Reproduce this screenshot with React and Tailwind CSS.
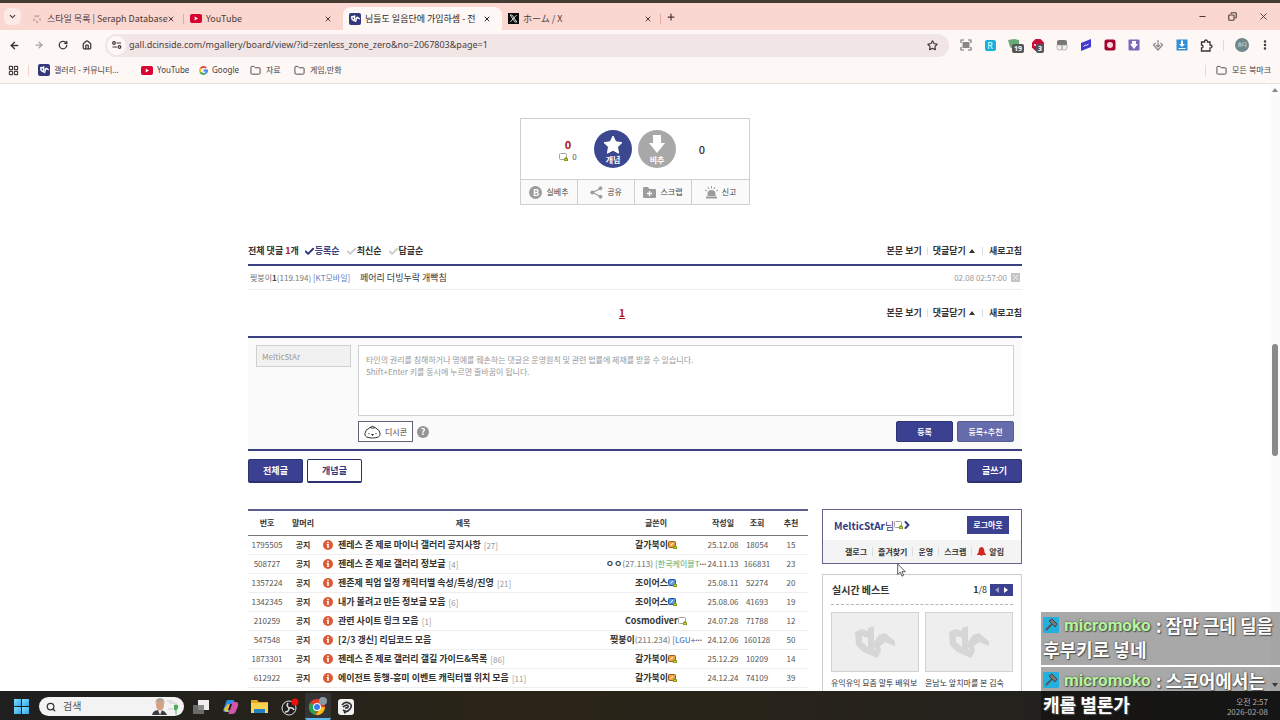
import React, { useState } from 'react';
import {
  ArrowLeft, ArrowRight, RotateCw, House, Star, ChevronDown, ChevronRight, X, Plus, Minus,
  Copy, LayoutGrid, Folder, EllipsisVertical, Check, Search
} from 'lucide-react';

const UI_FONT = "font-['Noto_Sans','Noto_Sans_CJK_KR',sans-serif]";
const KR_FONT = "font-['Noto_Sans_CJK_KR','Noto_Sans',sans-serif]";

/* ─── Small drawings ───────────────────────────────────────── */
const DcMark = ({ className }) => (
  <svg viewBox="0 0 40 33" className={className} fill="currentColor" aria-hidden="true">
    <path fillRule="evenodd" d="M13 2 19 0v23l6 4-3 5L8 26 1 19 0 6l7-3 6 2ZM7 10v6l6 5V12Z" />
    <path d="m19 16 5-7 6-2 11 9-1 4-10-4-5 4 1 6-3 1-4-6Z" />
  </svg>
);

const DcBadge = () => (
  <span className="flex size-3 shrink-0 items-center justify-center rounded-xs bg-[#34397d] text-white">
    <DcMark className="w-[9px]" />
  </span>
);

const YouTubeIcon = () => (
  <svg viewBox="0 0 12 9" className="w-3 shrink-0" aria-hidden="true">
    <rect width="12" height="9" rx="2" fill="#d8032f" />
    <path d="M4.700 2.500v4L8 4.500Z" fill="#fff" />
  </svg>
);

const GoogleIcon = () => (
  <svg viewBox="0 0 24 24" className="size-[9px] shrink-0" fill="none" strokeWidth="5" aria-hidden="true">
    <path d="M19 5.500A9.500 9.500 0 0 0 4 7" stroke="#ea4335" />
    <path d="M4 7a9.500 9.500 0 0 0 0 10" stroke="#fbbc05" />
    <path d="M4 17a9.500 9.500 0 0 0 14 2" stroke="#34a853" />
    <path d="M18 19a9 9 0 0 0 3.500-7H12" stroke="#4285f4" />
  </svg>
);

const XIcon = () => (
  <svg viewBox="0 0 11 11" className="size-[11px] shrink-0" aria-hidden="true">
    <rect width="11" height="11" fill="#0b0b0b" />
    <path d="M2.200 2h1.800l4.800 7H7ZM8.600 2 2.300 9" stroke="#fff" strokeWidth=".8" fill="none" />
  </svg>
);

// Member badge next to a nickname
const NameTag = ({ frame, fill }) => (
  <svg viewBox="0 0 9 8" className="inline-block w-[9px] shrink-0" aria-hidden="true">
    <rect x=".5" y=".5" width="7" height="6" rx="1" fill={fill} stroke={frame} />
    <path d="M2.500 4.500 5 2.200" stroke="#fff" />
    <path d="M5 8V5.300h1V4.300h2v1h1V8Z" fill="#7b9b16" />
    <path d="M6.300 6h1.400v1.200H6.300Z" fill="#f4e84c" />
  </svg>
);
const GrayTag = () => <NameTag frame="#a3a3a3" fill="#ffffff" />;
const GoldTag = () => <NameTag frame="#9b5a14" fill="#f0a53c" />;
const BlueTag = () => <NameTag frame="#24529c" fill="#5b9be6" />;

/* ─── Browser chrome ───────────────────────────────────────── */
const tabs = [
  { title: '스타일 목록 | Seraph Database', icon: <span className="m-[2px] size-2 shrink-0 rounded-full border-2 border-dotted border-[#c3a9a4]" /> },
  { title: 'YouTube', icon: <YouTubeIcon /> },
  { title: '님들도 일음단에 가입하셈 - 전', icon: <DcBadge />, active: true },
  { title: 'ホーム / X', icon: <XIcon /> },
];

const TabBar = () => (
  <div className="flex h-[30px] shrink-0 items-stretch border-t-3 border-[#453c31] bg-[#fad7d0] pl-1 text-[#4d3b39]">
    <button aria-label="탭 검색" className="mt-[5px] mr-1 flex size-[17px] items-center justify-center rounded-md bg-[#fdeae6]">
      <ChevronDown className="size-[9px]" strokeWidth={3} />
    </button>
    {tabs.map(({ title, icon, active }, i) => (
      <div
        key={title}
        className={`mt-1 flex w-[159px] items-center gap-1 pr-[7px] pl-[6px] ${active ? 'rounded-t-lg bg-[#fdf7f5] text-[#2d2422]' : ''}`}
      >
        {icon}
        <span className={`min-w-0 flex-1 text-[9px] leading-3 whitespace-nowrap ${KR_FONT}`}>{title}</span>
        <button aria-label="탭 닫기" className="mr-1"><X className="size-2" strokeWidth={3} /></button>
        {(i === 0 || i === 3) && <span className="-mr-[7px] h-[10px] w-px bg-[#e3aaa1]" />}
      </div>
    ))}
    <button aria-label="새 탭" className="ml-[5px]"><Plus className="size-[10px]" strokeWidth={3} /></button>
    <div className="ml-auto flex items-center gap-[21px] pr-[11px]">
      <button aria-label="최소화"><Minus className="size-[9px]" strokeWidth={3} /></button>
      <button aria-label="이전 크기로"><Copy className="size-[9px] -scale-x-100" strokeWidth={3} /></button>
      <button aria-label="닫기"><X className="size-[11px]" strokeWidth={2} /></button>
    </div>
  </div>
);

const CountBadge = ({ children }) => (
  <span className="absolute top-[5px] left-[4px] rounded-xs bg-[#555] px-[2px] text-[7px] leading-[9px] font-bold text-white">{children}</span>
);

const extensions = [
  <svg viewBox="0 0 12 12" className="size-3"><path d="M1 4V1h3M8 1h3v3M11 8v3H8M4 11H1V8" fill="none" stroke="#777" strokeWidth="1.200" /><path d="M2.500 3h7v6h-7Z" fill="#888" /></svg>,
  <span className="flex size-[11px] items-center justify-center rounded-xs bg-[#16b1da] text-[9px] leading-none text-white">R</span>,
  <span className="relative size-3"><svg viewBox="0 0 12 12"><path d="M0 1 6 0l5 1v6L6 11 2 8Z" fill="#68ab78" /></svg><CountBadge>19</CountBadge></span>,
  <span className="relative size-3"><svg viewBox="0 0 12 12"><path d="M3.500 0h5L12 3.500v5L8.500 12h-5L0 8.500v-5Z" fill="#c70d38" /><path d="M2 6h8" stroke="#fff" strokeWidth="1.500" strokeDasharray="2 1" /></svg><CountBadge>3</CountBadge></span>,
  <svg viewBox="0 0 12 12" className="size-3"><path d="M1 3q0-2 2-2h6q2 0 2 2v3H1Z" fill="#777" /><path d="M1 6h4.500v5H3Q1 11 1 9ZM6.500 6H11v3q0 2-2 2H6.500Z" fill="#eee" stroke="#999" strokeWidth=".6" /></svg>,
  <svg viewBox="0 0 12 12" className="size-3"><path d="M1 4 11 0v8L1 12Z" fill="#433bd0" /><path d="m3.500 7.500 2-1.500 1 .5 2-1.500" stroke="#fff" fill="none" /></svg>,
  <svg viewBox="0 0 12 12" className="size-3"><rect x=".5" y=".5" width="11" height="11" rx="2" fill="#a3052f" /><circle cx="6" cy="6" r="3" fill="#fbd5dc" /></svg>,
  <svg viewBox="0 0 12 12" className="size-3"><rect x=".5" y=".5" width="11" height="11" rx="1" fill="#7c67b8" /><path d="M4 2h4v3h2l-4 5-4-5h2Z" fill="#fff" /></svg>,
  <svg viewBox="0 0 12 12" className="size-3" fill="none" stroke="#888" strokeWidth="1.200"><path d="M3.500 4 1.500 6 6 11l4.500-5-2-2M6 1v7M4 6l2 2 2-2" /></svg>,
  <svg viewBox="0 0 12 12" className="size-3"><rect x=".5" y=".5" width="11" height="11" fill="#2f90d8" /><path d="M5 1.500h2V5h2L6 8 3 5h2ZM2.500 9h7v1h-7Z" fill="#fff" /></svg>,
  <svg viewBox="0 0 13 13" className="size-[13px]" fill="none" stroke="#3b3230" strokeWidth="1.300"><path d="M1.500 3H4.500Q4.500 1 6 1t1.500 2h2.500v3q2 0 2 1.500T10 9v3H1.500V9q1.500 0 1.500-1.500T1.500 6Z" /></svg>,
];

const Toolbar = () => (
  <div className="flex h-[30px] shrink-0 items-center bg-[#fdf7f5] text-[#3f3634]">
    <div className="flex w-[105px] items-center gap-[14px] pl-[9px]">
      <button aria-label="뒤로"><ArrowLeft className="size-[11px]" strokeWidth={3} /></button>
      <button aria-label="앞으로"><ArrowRight className="size-[10px] text-[#a89d9b]" strokeWidth={3} /></button>
      <button aria-label="새로고침"><RotateCw className="size-[10px]" strokeWidth={3} /></button>
      <button aria-label="홈"><House className="size-[10px]" strokeWidth={3} /></button>
    </div>
    <div className="flex h-[23px] min-w-0 flex-1 items-center rounded-full bg-[#f1e5e6] pr-[11px] pl-[2px]">
      <span className="mr-[3px] flex size-[19px] items-center justify-center rounded-full bg-[#fdf7f5]">
        <svg viewBox="0 0 10 8" className="w-[10px]" fill="none" stroke="currentColor" strokeWidth="1.200">
          <circle cx="2" cy="2" r="1.300" /><path d="M4.500 2H9M.5 6h4.500" /><circle cx="7.500" cy="6" r="1.300" />
        </svg>
      </span>
      <input
        aria-label="주소창"
        defaultValue="gall.dcinside.com/mgallery/board/view/?id=zenless_zone_zero&no=2067803&page=1"
        className="min-w-0 flex-1 bg-transparent text-[9px] text-[#4b4041] outline-none"
      />
      <button aria-label="북마크 추가"><Star className="size-[11px]" strokeWidth={2.500} /></button>
    </div>
    <div className="flex items-center pl-[5px]">
      {extensions.map((icon, i) => (
        <button key={i} aria-label={`확장 프로그램 ${i + 1}`} className="flex w-6 justify-center">{icon}</button>
      ))}
    </div>
    <span className="ml-[5px] h-[11px] w-px bg-[#ecd7d4]" />
    <button aria-label="프로필" className="ml-[11px] flex size-[14px] items-center justify-center rounded-full bg-[#70878c] text-[5px] text-white">쇼디</button>
    <button aria-label="메뉴" className="mr-[9px] ml-[10px]"><EllipsisVertical className="size-3" strokeWidth={3} /></button>
  </div>
);

const Bookmark = ({ icon, children, className = '' }) => (
  <a href="#" className={`flex items-center gap-1 ${className}`}>{icon}{children}</a>
);
const FolderIcon = () => <Folder className="mr-px size-[11px]" strokeWidth={2} />;

const BookmarkBar = () => (
  <div className="flex h-6 shrink-0 items-center border-b border-[#e6e1e0] bg-[#fdf7f5] pb-[3px] pl-2 text-[8px] text-[#4b4041]">
    <LayoutGrid className="size-[11px]" strokeWidth={2.500} />
    <span className="mr-[9px] ml-[9px] h-[11px] w-px bg-[#f7d3cd]" />
    <Bookmark icon={<DcBadge />} className="w-[103px]">갤러리 - 커뮤니티...</Bookmark>
    <Bookmark icon={<YouTubeIcon />} className="w-[58px]">YouTube</Bookmark>
    <Bookmark icon={<GoogleIcon />} className="w-[51px]">Google</Bookmark>
    <Bookmark icon={<FolderIcon />} className="w-[44px]">자료</Bookmark>
    <Bookmark icon={<FolderIcon />}>게임,만화</Bookmark>
    <span className="mr-[10px] ml-auto h-[11px] w-px bg-[#ecd7d4]" />
    <Bookmark icon={<FolderIcon />} className="mr-[9px]">모든 북마크</Bookmark>
  </div>
);

/* ─── Vote box ─────────────────────────────────────────────── */
const voteActions = [
  { label: '실베추', icon: <span className="flex size-[13px] items-center justify-center rounded-full bg-[#9c9c9c] text-[9px] leading-none font-bold text-white">B</span> },
  {
    label: '공유',
    icon: (
      <svg viewBox="0 0 13 13" className="w-[13px]" fill="#9c9c9c" stroke="#9c9c9c"><path d="M10.500 2.500 2.500 6.500l8 4" fill="none" strokeWidth="1.200" /><circle cx="10.500" cy="2.300" r="1.500" /><circle cx="2.300" cy="6.500" r="1.500" /><circle cx="10.500" cy="10.700" r="1.500" /></svg>
    ),
  },
  {
    label: '스크랩',
    icon: (
      <svg viewBox="0 0 13 11" className="w-[13px]"><path d="M0 1q0-1 1-1h4l1.500 2H12q1 0 1 1v7q0 1-1 1H1q-1 0-1-1Z" fill="#9c9c9c" /><path d="M6.500 4v5M4 6.500h5" stroke="#fff" strokeWidth="1.300" /></svg>
    ),
  },
  {
    label: '신고',
    icon: (
      <svg viewBox="0 0 13 13" className="w-[13px]"><path d="M2.500 10V8a4 4 0 0 1 8 0v2ZM1 10.500h11v2H1Z" fill="#9c9c9c" /><path d="M6.500 0v2.500M3 1l1 2M10 1 9 3M0 4l2 1M13 4l-2 1" stroke="#9c9c9c" /></svg>
    ),
  },
];

const VoteBox = () => (
  <div className="mx-auto w-[230px] border border-[#cfcfcf]">
    <div className="flex h-[60px] items-center justify-center">
      <div className="flex w-[52px] flex-col items-center gap-px">
        <strong className="text-[11px] leading-[14px] text-[#b01212]">0</strong>
        <span className="flex items-center gap-1 text-[8px] leading-[10px] text-[#555]"><GrayTag />0</span>
      </div>
      <button className="flex size-[38px] flex-col items-center rounded-full bg-[#3b4890] pt-[5px] text-[8px] leading-[10px] font-bold text-white">
        <svg viewBox="0 0 20 20" className="size-5"><path d="m10 1 2.800 5.800 6.200.8-4.500 4.300 1.100 6.300L10 15.200l-5.600 3 1.100-6.300L1 7.600l6.200-.8Z" fill="#fff" stroke="#fff" strokeLinejoin="round" /></svg>
        개념
      </button>
      <button className="ml-[6px] flex size-[38px] flex-col items-center rounded-full bg-[#a8a8a8] pt-[5px] text-[8px] leading-[10px] font-bold text-white">
        <svg viewBox="0 0 20 20" className="size-5"><path d="M6 0h8v8h4l-8 10L2 8h4Z" fill="#fff" /></svg>
        비추
      </button>
      <div className="w-[52px] text-center text-[11px] font-medium text-[#333]">0</div>
    </div>
    <div className="grid h-[25px] grid-cols-4 divide-x divide-[#cfcfcf] border-t border-[#cfcfcf] bg-[#fafafa]">
      {voteActions.map(({ label, icon }) => (
        <button key={label} className="flex items-center justify-center gap-1 text-[8px] text-[#444]">{icon}{label}</button>
      ))}
    </div>
  </div>
);

/* ─── Comments ─────────────────────────────────────────────── */
const CommentLinks = () => (
  <div className="flex items-center">
    <a href="#">본문 보기</a>
    <span className="mx-[5px] h-2 w-px bg-[#ddd]" />
    <button className="flex items-center gap-[3px]">
      댓글닫기
      <svg viewBox="0 0 6 4" className="w-[6px]"><path d="M0 4 3 0l3 4Z" fill="#333" /></svg>
    </button>
    <span className="mr-[6px] ml-[7px] h-2 w-px bg-[#ddd]" />
    <button>새로고침</button>
  </div>
);

const Comments = () => {
  const [sort, setSort] = useState('등록순');
  return (
    <section className="text-[9px] leading-3 text-[#333]">
      <div className="flex items-center border-b-2 border-[#3b4080] pb-[7px] font-bold">
        <h2 className="mr-[5px]">전체 댓글 <span className="text-[#b01212]">1</span>개</h2>
        {['등록순', '최신순', '답글순'].map(name => (
          <button
            key={name}
            onClick={() => setSort(name)}
            className={`mr-[6px] flex items-center ${sort === name ? 'text-[#3b4080]' : ''}`}
          >
            <Check className={`size-[11px] ${sort === name ? 'text-[#29367c]' : 'text-[#ccc]'}`} strokeWidth={4} />
            {name}
          </button>
        ))}
        <div className="ml-auto"><CommentLinks /></div>
      </div>
      <div className="flex h-6 items-center border-b border-[#eee] px-[2px]">
        <span className="w-[110px] text-[8px] whitespace-nowrap text-[#777]">
          찢붕이<b className="text-[#444]">1</b>(119.194) <span className="text-[#6384c4]">[KT모바일]</span>
        </span>
        <p>페어리 더빙누락 개빡침</p>
        <time className="ml-auto text-[8px] text-[#999]">02.08 02:57:00</time>
        <button aria-label="댓글 삭제" className="ml-1 bg-[#c4c4c4] text-white"><X className="size-[9px]" strokeWidth={2} /></button>
      </div>
      <div className="grid h-[46px] grid-cols-[1fr_auto_1fr] items-center font-bold">
        <span />
        <a href="#" className="pr-[26px] text-[10px] text-[#b01212] underline">1</a>
        <div className="justify-self-end"><CommentLinks /></div>
      </div>
    </section>
  );
};

const CommentForm = () => (
  <form className="flex gap-[7px] border-y-2 border-[#3b4080] bg-[#fafafa] px-2 py-[7px]" onSubmit={e => e.preventDefault()}>
    <input
      aria-label="닉네임"
      readOnly
      value="MelticStAr"
      className="h-[22px] w-[95px] border border-[#d0d0d0] bg-[#f1f1f1] px-[5px] text-[8px] text-[#999]"
    />
    <div className="flex min-w-0 flex-1 flex-col">
      <textarea
        aria-label="댓글"
        className="h-[71px] resize-none border border-[#d0d0d0] bg-white px-[7px] py-2 text-[8px] leading-3 placeholder-[#999] outline-none"
        placeholder={'타인의 권리를 침해하거나 명예를 훼손하는 댓글은 운영원칙 및 관련 법률에 제재를 받을 수 있습니다.\nShift+Enter 키를 동시에 누르면 줄바꿈이 됩니다.'}
      />
      <div className="mt-[5px] flex items-center">
        <button type="button" className="flex h-[21px] w-[55px] items-center justify-center gap-1 border border-[#5f6379] bg-white text-[8px] text-[#444]">
          <svg viewBox="0 0 17 14" className="w-[17px]" fill="none" stroke="#333">
            <path d="M6 2.500Q.8 5 .8 9q0 4 7.700 4t7.700-4q0-4-5.200-6.500M6 2.500Q8.500 0 11 2.500 9 4 6 2.500Z" />
            <path d="M5 8v1.200M12 8v1.200M7.500 9.500h2l-1 1Z" />
          </svg>
          디시콘
        </button>
        <button type="button" aria-label="도움말" className="ml-1 flex size-3 items-center justify-center rounded-full bg-[#949494] text-[9px] leading-none font-bold text-white">?</button>
        <button className="ml-auto h-[21px] w-[57px] rounded-xs border border-[#2d3578] bg-[#3b4090] text-[8px] font-bold text-white">등록</button>
        <button type="button" className="ml-1 h-[21px] w-[57px] rounded-xs border border-[#555c99] bg-[#666cab] text-[8px] font-medium text-white">등록+추천</button>
      </div>
    </div>
  </form>
);

/* ─── Post list ────────────────────────────────────────────── */
const posts = [
  { no: '1795505', title: '젠레스 존 제로 마이너 갤러리 공지사항', replies: 27, writer: '갈가북이', tag: <GoldTag />, date: '25.12.08', views: '18054', votes: 15 },
  { no: '508727', title: '젠레스 존 제로 갤러리 정보글', replies: 4, writer: 'ㅇㅇ', ip: '(27.113)', isp: '[한국케이블T', ispColor: 'text-[#7dba88]', date: '24.11.13', views: '166831', votes: 23 },
  { no: '1357224', title: '젠존제 픽업 일정 캐릭터별 속성/특성/진영', replies: 21, writer: '조이어스', tag: <BlueTag />, date: '25.08.11', views: '52274', votes: 20 },
  { no: '1342345', title: '내가 볼려고 만든 정보글 모음', replies: 6, writer: '조이어스', tag: <BlueTag />, date: '25.08.06', views: '41693', votes: 19 },
  { no: '210259', title: '관련 사이트 링크 모음', replies: 1, writer: 'Cosmodiver', tag: <GrayTag />, date: '24.07.28', views: '71788', votes: 12 },
  { no: '547548', title: '[2/3 갱신] 리딤코드 모음', writer: '찢붕이', ip: '(211.234)', isp: '[LGU+', ispColor: 'text-[#5b7cc9]', date: '24.12.06', views: '160128', votes: 50 },
  { no: '1873301', title: '젠레스 존 제로 갤러리 갤길 가이드&목록', replies: 86, writer: '갈가북이', tag: <GoldTag />, date: '25.12.29', views: '10209', votes: 14 },
  { no: '612922', title: '에이전트 동행-흥미 이벤트 캐릭터별 위치 모음', replies: 11, writer: '갈가북이', tag: <GoldTag />, date: '24.12.24', views: '74109', votes: 39 },
];

const PostTable = () => (
  <table className="w-[560px] table-fixed self-start border-t-2 border-[#5c6091] text-center text-[8px] leading-3 whitespace-nowrap text-[#555]">
    <thead className="border-b border-[#777] font-bold text-[#333]">
      <tr className="h-[25px]">
        <th className="w-[38px]">번호</th>
        <th className="w-[34px]">말머리</th>
        <th>제목</th>
        <th className="w-[100px]">글쓴이</th>
        <th className="w-[34px]">작성일</th>
        <th className="w-[34px]">조회</th>
        <th className="w-[34px]">추천</th>
      </tr>
    </thead>
    <tbody>
      {posts.map(p => (
        <tr key={p.no} className="h-[19px] border-b border-[#eee]">
          <td>{p.no}</td>
          <td className="font-bold text-[#333]">공지</td>
          <td className="pl-[3px] text-left">
            <a href="#" className="flex items-center text-[9px] font-bold text-[#333]">
              <svg viewBox="0 0 10 10" className="mr-[5px] size-[10px]"><circle cx="5" cy="5" r="5" fill="#dc5a36" /><path d="M4.200 1.700h1.600v1.500H4.200ZM3.700 4h2.100v4H4.200V5h-.5Z" fill="#fff" /></svg>
              {p.title}
              {p.replies && <span className="ml-[3px] pt-[2px] text-[8px] font-normal text-[#999]">[{p.replies}]</span>}
            </a>
          </td>
          <td>
            <span className="flex items-center justify-center text-[9px] font-bold text-[#333]">
              {p.writer}
              {p.tag}
              {p.ip && (
                <span className="text-[8px] font-medium text-[#888]">
                  {p.ip} <span className={p.ispColor}>{p.isp}</span>
                  <span className="font-['Noto_Sans',sans-serif] font-bold text-[#555]">···</span>
                </span>
              )}
            </span>
          </td>
          <td>{p.date}</td>
          <td>{p.views}</td>
          <td>{p.votes}</td>
        </tr>
      ))}
    </tbody>
  </table>
);

/* ─── Sidebar ──────────────────────────────────────────────── */
const best = ['유익유익 묘즘 말투 배워보', '윤남노 앞치마를 본 김숙'];

const Sidebar = () => (
  <aside className="w-[200px]">
    <div className="border border-[#62668f]">
      <div className="flex h-[30px] items-center pr-3 pl-[11px] text-[10px] text-[#34397d]">
        <a href="#" className="flex items-center"><b>MelticStAr</b>님<GrayTag /><ChevronRight className="-ml-[2px] size-3" strokeWidth={4} /></a>
        <button className="ml-auto h-[18px] w-[42px] bg-[#3b4090] text-[8px] font-bold text-white">로그아웃</button>
      </div>
      <nav className="flex h-[23px] items-center justify-center divide-x divide-[#ddd] bg-[#f4f4f4] text-[8px] leading-[9px] font-bold text-[#333]">
        {['갤로그', '즐겨찾기', '운영', '스크랩'].map(name => <a key={name} href="#" className="px-[5px]">{name}</a>)}
        <a href="#" className="flex items-center gap-[3px] pl-[5px]">
          <svg viewBox="0 0 10 10" className="size-[9px]"><path d="M5 0q3 .5 3 4 0 2.500 2 4v1H0V8q2-1.500 2-4 0-3.500 3-4ZM3.500 9h3L5 10Z" fill="#d3281d" /></svg>
          알림
        </a>
      </nav>
    </div>
    <div className="mt-[10px] border border-[#ccc] px-2 pb-6">
      <div className="flex h-[30px] items-center border-b border-dashed border-[#b5b5b5] text-[9px] text-[#333]">
        <h3 className="mr-auto pl-px text-[10px] font-bold">실시간 베스트</h3>
        <b>1</b>/8
        <span className="ml-[3px] flex h-3 w-[23px] items-center justify-evenly bg-[#3b4090]">
          <button aria-label="이전" className="flex"><svg viewBox="0 0 4 6" className="h-[6px]"><path d="M4 0v6L0 3Z" fill="#989cd0" /></svg></button>
          <button aria-label="다음" className="flex"><svg viewBox="0 0 4 6" className="h-[6px]"><path d="M0 0v6l4-3Z" fill="#fff" /></svg></button>
        </span>
      </div>
      <div className="mt-[7px] grid grid-cols-2 gap-[6px]">
        {best.map(title => (
          <a key={title} href="#" className="text-[8px] whitespace-nowrap text-[#333]">
            <span className="mb-[5px] flex h-[60px] items-center justify-center border border-[#d2d2d2] bg-[#eee] text-[#d6d6d6]">
              <DcMark className="w-10" />
            </span>
            {title}
          </a>
        ))}
      </div>
    </div>
  </aside>
);

/* ─── Gallery page ─────────────────────────────────────────── */
const GalleryPage = () => (
  <main className={`min-w-0 flex-1 overflow-hidden bg-white pt-[34px] ${KR_FONT}`}>
    <VoteBox />
    <div className="mx-auto mt-10 max-w-[774px]">
      <Comments />
      <CommentForm />
      <div className="mt-2 flex h-6 gap-1 text-[9px] font-bold">
        <button className="w-[55px] rounded-xs border border-b-2 border-[#2b3172] bg-[#3b4090] text-white">전체글</button>
        <button className="w-[55px] rounded-xs border border-b-2 border-[#2b3172] bg-white text-[#34397d]">개념글</button>
        <button className="ml-auto w-[55px] rounded-xs border border-b-2 border-[#2b3172] bg-[#3b4090] text-white">글쓰기</button>
      </div>
      <div className="mt-[26px] flex justify-between">
        <PostTable />
        <Sidebar />
      </div>
    </div>
  </main>
);

const Scrollbar = () => (
  <div className="flex w-[10px] shrink-0 flex-col items-center bg-[#fcfafa] py-1">
    <svg viewBox="0 0 6 4" className="w-[6px]"><path d="M0 4 3 0l3 4Z" fill="#888" /></svg>
    <span className="mt-[252px] h-28 w-[6px] rounded-full bg-[#8b8888]" />
    <svg viewBox="0 0 6 4" className="mt-auto w-[6px]"><path d="M0 0h6L3 4Z" fill="#555" /></svg>
  </div>
);

/* ─── Taskbar ──────────────────────────────────────────────── */
const Taskbar = () => (
  <footer className="flex h-[29px] shrink-0 items-center bg-linear-to-r from-[#1f1f1f] via-[#2b2517] via-40% to-[#202020] pt-[2px] pl-[14px]">
    <button aria-label="시작" className="grid size-[15px] grid-cols-2 gap-px">
      {[0, 1, 2, 3].map(i => <span key={i} className="bg-linear-to-br from-[#7fdcfb] to-[#2ea6ea]" />)}
    </button>
    <label className="ml-[10px] flex h-[19px] w-[145px] items-center rounded-full bg-[#f3f3f3] pr-1 pl-[7px] text-[#333]">
      <Search className="size-[10px] shrink-0" strokeWidth={3} />
      <input aria-label="검색" placeholder="검색" className="ml-[7px] min-w-0 flex-1 text-[10px] placeholder-[#555] outline-none" />
      <svg viewBox="0 0 28 17" className="w-7 shrink-0">
        <path d="M0 17q1-5 7-5t8 5Z" fill="#3c3c42" /><path d="m6 12 2 5 2-5Z" fill="#eee" />
        <ellipse cx="8" cy="7" rx="4" ry="5.500" fill="#d3a183" /><path d="M3.500 6Q3 0 8 0t4.500 6L11 3H5Z" fill="#a9a39a" />
        <path d="M15 3h6M17 5h8M16 11h5" stroke="#ccc" /><path d="M22 7q5-2 4 3-1 3-4 2Z" fill="#52aa5e" /><path d="M24 10v6" stroke="#52aa5e" />
      </svg>
    </label>
    <div className="ml-[2px] flex items-center">
      <button aria-label="작업 보기" className="flex w-[30px] justify-center">
        <svg viewBox="0 0 16 14" className="w-4"><path d="M5 0h11v10H5Z" fill="#eee" /><path d="M0 5h11v9H0Z" fill="#777" fillOpacity=".85" /></svg>
      </button>
      <button aria-label="Copilot" className="flex w-[29px] justify-center">
        <svg viewBox="0 0 16 15" className="w-4"><path d="M5 1h5q2 0 1 3L9 10q-1 3-4 3H2q-3 0-1-4l2-6q.5-2 2-2Z" fill="#2c8ee8" /><path d="m5 5 3 0-3 8q-4 0-4-3Z" fill="#ecc13e" /><path d="M10 3h3q3 0 2 4l-2 5q-1 3-3 3H6q-1 0 0-2l2-7q.5-3 2-3Z" fill="#d254a8" /><path d="M7 5h2L7 11H5Z" fill="#202020" /></svg>
      </button>
      <button aria-label="파일 탐색기" className="flex w-[29px] justify-center">
        <svg viewBox="0 0 17 15" className="w-[17px]"><path d="M0 1h6l2 2h9v11H0Z" fill="#e5a920" /><path d="M0 4h17v10H0Z" fill="#fad252" /><path d="M3 10h11v4H3Z" fill="#2180c4" /></svg>
      </button>
      <button aria-label="OBS" className="flex w-[31px] justify-center">
        <svg viewBox="0 0 18 18" className="w-[18px]"><circle cx="8" cy="10" r="7" fill="#202020" stroke="#ddd" /><path d="M8 10q-3-2-1-5M8 10q4-1 5 2M8 10q0 4-4 4" stroke="#ddd" strokeWidth="1.500" fill="none" /><circle cx="14" cy="4" r="3.500" fill="#ef0d0d" /></svg>
      </button>
      <button aria-label="Chrome" className="flex h-[27px] w-[26px] items-center justify-center rounded-xs border-b-2 border-[#5db7ee] bg-[#343434]">
        <svg viewBox="0 0 18 18" className="w-[18px]">
          <circle cx="8" cy="10" r="8" fill="#e33b2e" /><path d="M8 10 1 6a8 8 0 0 0 6 12Z" fill="#2ba24c" /><path d="M8 10h8a8 8 0 0 1-9 8l3-5Z" fill="#fbc116" />
          <circle cx="8" cy="10" r="4" fill="#fff" /><circle cx="8" cy="10" r="3" fill="#3b7de8" /><circle cx="14" cy="4" r="4" fill="#8b9ba6" />
        </svg>
      </button>
      <button aria-label="Clip Studio" className="flex w-[30px] justify-center">
        <svg viewBox="0 0 16 16" className="w-4"><rect width="16" height="16" rx="3" fill="#f1f1f1" /><path d="M4 6q3-4 7-2t1 6-7 1M5 8q4-3 5-1t-3 2M8 13l-2 1" fill="none" stroke="#333" strokeWidth="1.700" /></svg>
      </button>
    </div>
  </footer>
);

/* ─── Stream chat overlay ──────────────────────────────────── */
const chat = [
  { first: ': 잠만 근데 딜을', rest: '후부키로 넣네' },
  { first: ': 스코어에서는', rest: '캐롤 별론가' },
];

const ChatOverlay = () => (
  <div className={`absolute right-0 bottom-0 flex w-[239px] flex-col gap-[2px] text-[18px] leading-6 font-bold text-white ${KR_FONT}`}>
    {chat.map(({ first, rest }) => (
      <div key={first} className="h-[53px] bg-black/34 px-[2px] pt-px [text-shadow:0_0_2px_#444,1px_1px_1px_#555]">
        <div className="flex items-center gap-[5px] whitespace-nowrap">
          <svg viewBox="0 0 16 16" className="size-4">
            <rect width="16" height="16" rx="1" fill="#24b0df" /><path d="m3 13 6-6" stroke="#555" strokeWidth="2" /><path d="m6 4 3-2 5 5-2 3Z" fill="#777" stroke="#444" />
          </svg>
          <span className="font-['Roboto',sans-serif] text-[17px] text-[#b5f59b]">micromoko</span>
          <span>{first}</span>
        </div>
        <p>{rest}</p>
      </div>
    ))}
    <div className="absolute right-3 bottom-[3px] text-right text-[8px] leading-[10px] font-normal text-[#aaa]">
      오전 2:57<br />2026-02-08
    </div>
  </div>
);

const App = () => (
  <div className={`relative flex h-screen flex-col overflow-hidden bg-white ${UI_FONT}`}>
    <TabBar />
    <Toolbar />
    <BookmarkBar />
    <div className="flex min-h-0 flex-1">
      <GalleryPage />
      <Scrollbar />
    </div>
    <Taskbar />
    <ChatOverlay />
    {/* Mouse pointer */}
    <svg viewBox="0 0 9 14" className="absolute top-[563px] left-[897px] w-[9px]" aria-hidden="true">
      <path d="M.7 1v10.500l2.500-2.300 1.800 4 1.600-.8-1.700-3.700h3.400Z" fill="#fff" stroke="#333" strokeWidth=".8" />
    </svg>
  </div>
);

export default App;
